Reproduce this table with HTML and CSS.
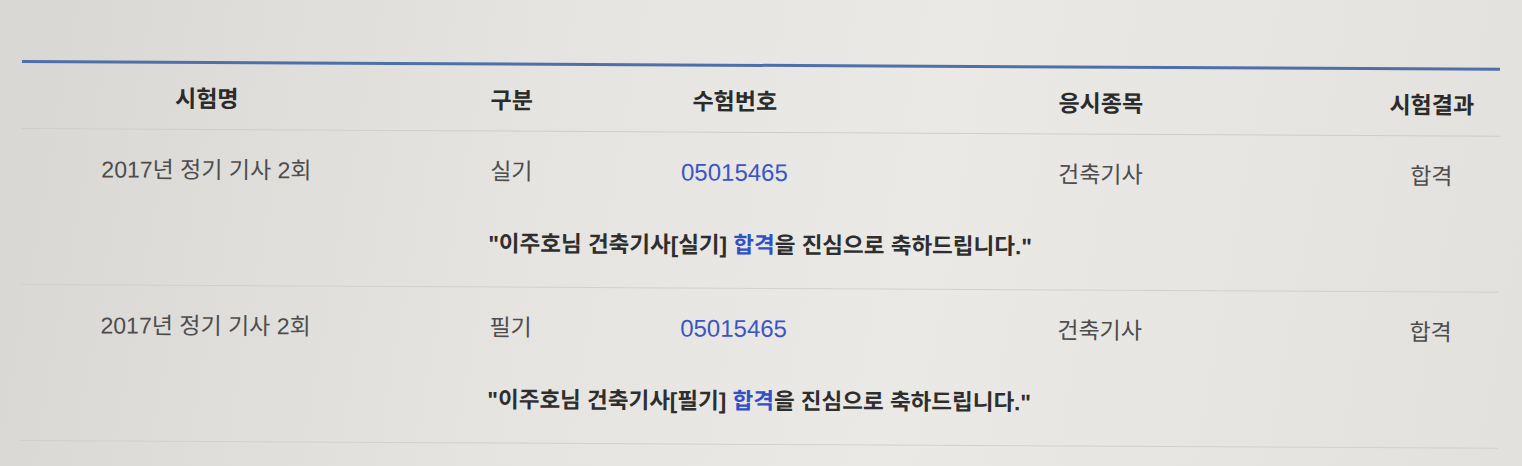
FILE: index.html
```html
<!DOCTYPE html>
<html lang="ko">
<head>
  <meta charset="UTF-8" />
  <meta name="viewport" content="width=device-width, initial-scale=1.0"/>
  <title>시험결과 조회</title>
  <link rel="stylesheet" href="styles.css">
</head>
<body>

  <div class="board">
    <table class="result-table">
      <colgroup>
        <col class="c-name">
        <col class="c-type">
        <col class="c-no">
        <col class="c-item">
        <col class="c-result">
      </colgroup>
      <thead>
        <tr><th>시험명</th><th>구분</th><th>수험번호</th><th>응시종목</th><th>시험결과</th></tr>
      </thead>
      <tbody>
        <tr class="data">
          <td>2017년 정기 기사 2회</td><td>실기</td><td class="num">05015465</td><td>건축기사</td><td>합격</td>
        </tr>
        <tr class="msg">
          <td colspan="5">"이주호님 건축기사[실기] <span class="pass">합격</span>을 진심으로 축하드립니다."</td>
        </tr>
        <tr class="data">
          <td>2017년 정기 기사 2회</td><td>필기</td><td class="num">05015465</td><td>건축기사</td><td>합격</td>
        </tr>
        <tr class="msg">
          <td colspan="5">"이주호님 건축기사[필기] <span class="pass">합격</span>을 진심으로 축하드립니다."</td>
        </tr>
      </tbody>
    </table>
  </div>

</body>
</html>
```

FILE: styles.css
```css
body {
  margin: 0;
  font-family: "Liberation Sans", "Noto Sans CJK KR", sans-serif;
  background: linear-gradient(100deg, #d9d7d4 0%, #e5e4e1 35%, #eae9e6 60%, #e2e1de 100%);
  color: #4d4d4d;
  height: 466px;
  overflow: hidden;
}
.board {
  padding: 60px 0 0 22px;
}
.result-table {
  width: 1478px;
  border-collapse: collapse;
  border-top: 3px solid #4f6fa8;
  font-size: 23px;
  transform: rotate(0.3deg);
  transform-origin: left top;
}
.c-name { width: 370px; }
.c-type { width: 240px; }
.c-no { width: 206px; }
.c-item { width: 526px; }
.c-result { width: 136px; }
th {
  height: 65px;
  padding: 0;
  font-weight: bold;
  color: #2b2b2b;
  text-align: center;
  border-bottom: 1px solid #cfcdca;
}
td {
  text-align: center;
  padding: 0;
}
.data td {
  padding-top: 28px;
  line-height: 24px;
}
.msg td {
  padding: 49px 0 30px;
  line-height: 24px;
  font-size: 22.5px;
  font-weight: bold;
  color: #2e2e2e;
  border-bottom: 1px solid #d2d0cd;
}
.num {
  color: #3b55c4;
  font-size: 24px;
}
.pass {
  color: #3150c8;
}
```
